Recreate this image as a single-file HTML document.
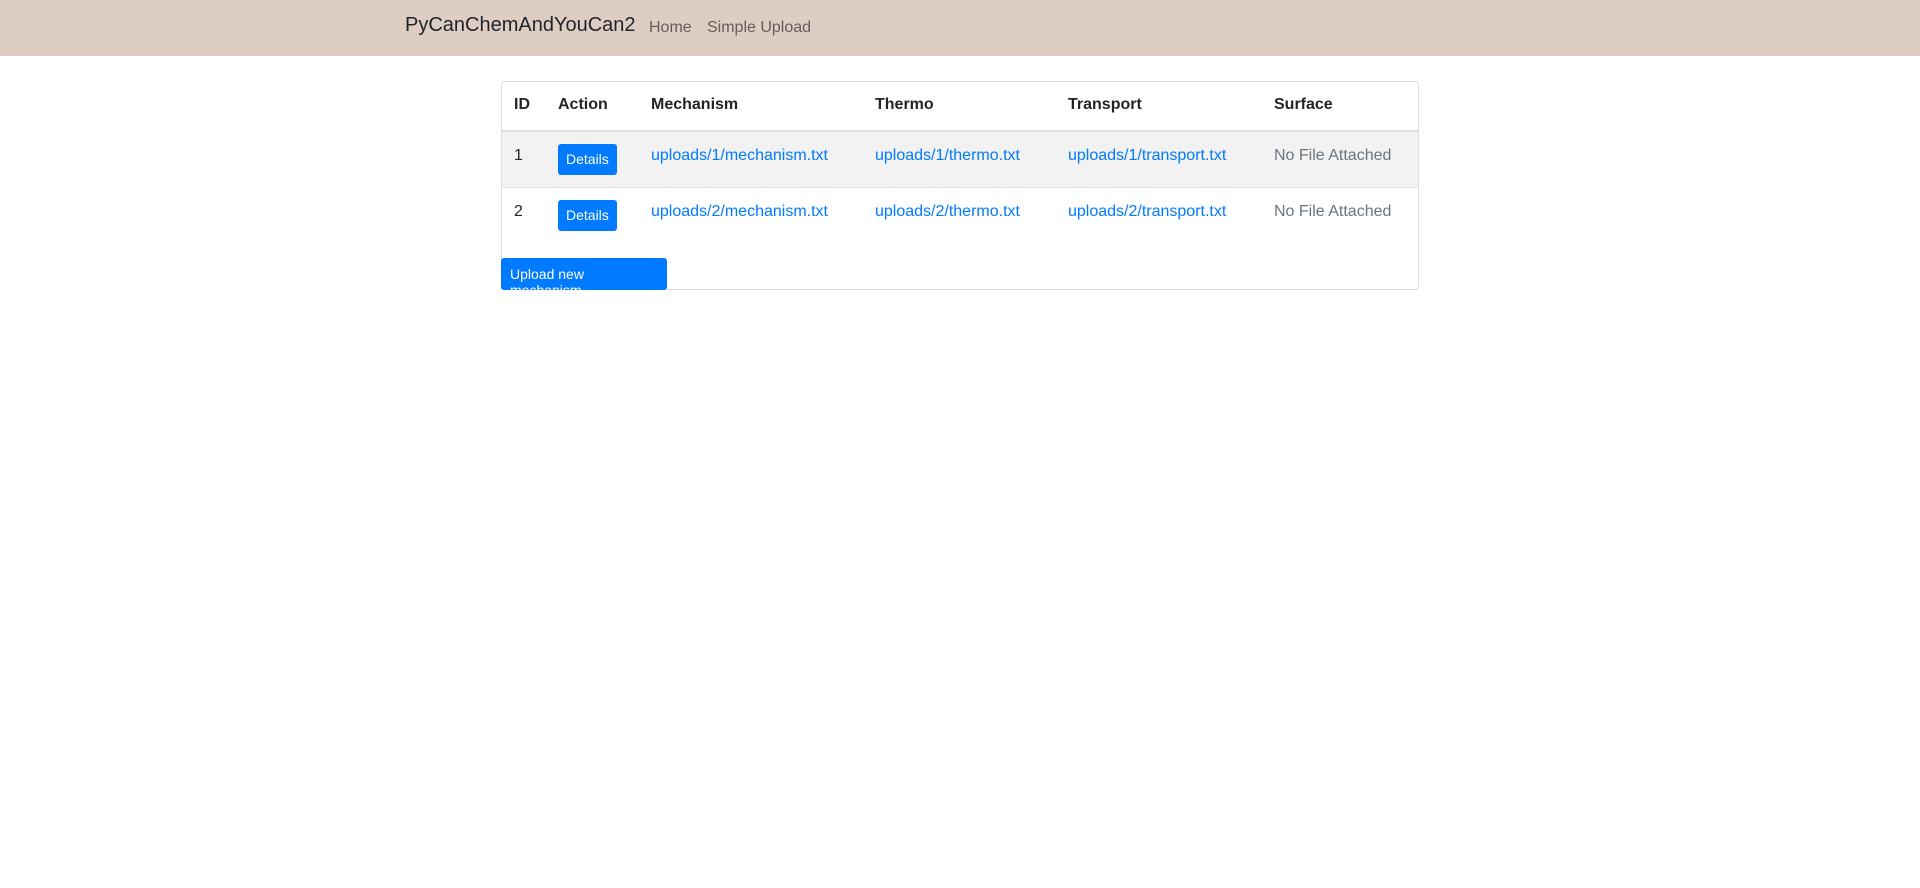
<!DOCTYPE html>
<html><head><meta charset="utf-8"><style>
*{box-sizing:border-box}
body{margin:0;font-family:"Liberation Sans",sans-serif;font-size:16px;color:#212529;background:#fff}
.nav{height:56px;background:#decdc3;position:relative}
.brand{position:absolute;left:405px;top:14px;font-size:20px;color:#212529}
.nl{position:absolute;top:19px;font-size:16px;color:rgba(0,0,0,.55)}
.card{position:absolute;left:501px;top:81px;width:918px;height:209px;border:1px solid #dcdcdc;border-radius:4px}
table{border-collapse:collapse;width:916px;table-layout:fixed}
th,td{padding:12px;text-align:left;vertical-align:top;white-space:nowrap;overflow:hidden}
th{font-weight:bold;height:49px;padding-top:14px;border-bottom:2px solid #dee2e6}
td{height:56px;border-top:1px solid #dee2e6;padding-top:15px}
tr.odd td{background:#f2f2f2}
a{color:#007bff;text-decoration:none}
.muted{color:#6c757d}
.btn{display:inline-block;background:#007bff;color:#fff;font-size:14px;padding:7px 8px;border-radius:3px;line-height:17px;margin-top:-3px}
.up{position:absolute;left:-1px;top:176px;background:#007bff;color:#fff;font-size:14px;padding:8px 9px;border-radius:3px;line-height:16px;width:166px;height:32px}
</style></head><body>
<div class="nav"><span class="brand">PyCanChemAndYouCan2</span><span class="nl" style="left:649px">Home</span><span class="nl" style="left:707px">Simple Upload</span></div>
<div class="card">
<table>
<colgroup><col style="width:44px"><col style="width:93px"><col style="width:224px"><col style="width:193px"><col style="width:206px"><col style="width:156px"></colgroup>
<tr><th>ID</th><th>Action</th><th>Mechanism</th><th>Thermo</th><th>Transport</th><th>Surface</th></tr>
<tr class="odd"><td>1</td><td><span class="btn">Details</span></td><td><a>uploads/1/mechanism.txt</a></td><td><a>uploads/1/thermo.txt</a></td><td><a>uploads/1/transport.txt</a></td><td class="muted">No File Attached</td></tr>
<tr><td>2</td><td><span class="btn">Details</span></td><td><a>uploads/2/mechanism.txt</a></td><td><a>uploads/2/thermo.txt</a></td><td><a>uploads/2/transport.txt</a></td><td class="muted">No File Attached</td></tr>
</table>
<div class="up">Upload new mechanism</div>
</div>
</body></html>
